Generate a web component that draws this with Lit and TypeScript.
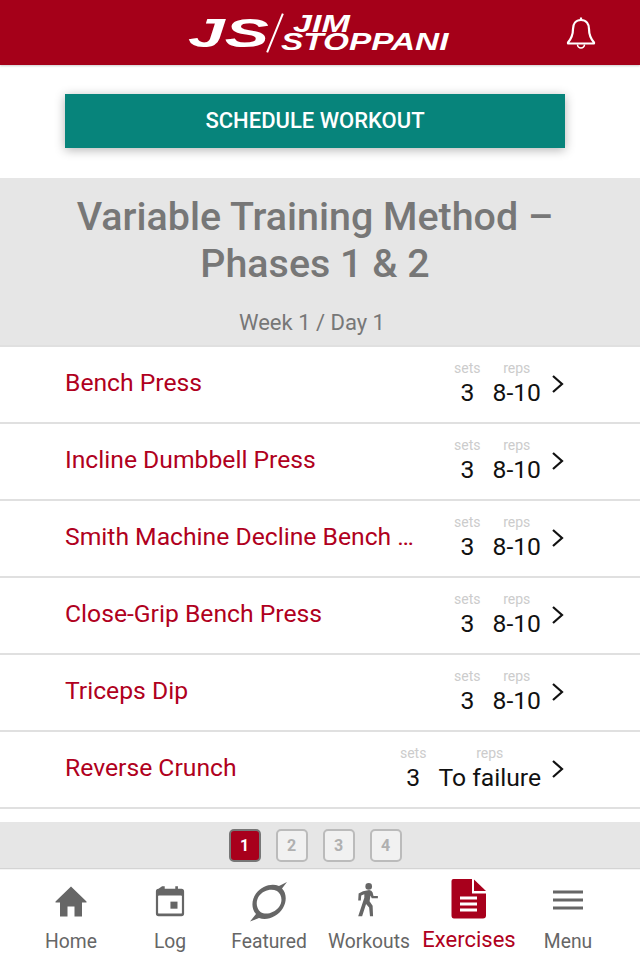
import { LitElement, html, css, svg } from "lit";
import { customElement } from "lit/decorators.js";

const rows = [
  ["Bench Press", "3", "8-10"],
  ["Incline Dumbbell Press", "3", "8-10"],
  ["Smith Machine Decline Bench Press", "3", "8-10"],
  ["Close-Grip Bench Press", "3", "8-10"],
  ["Triceps Dip", "3", "8-10"],
  ["Reverse Crunch", "3", "To failure"],
];

const icons: Record<string, unknown> = {
  home: svg`<svg width="34" height="34" viewBox="0 0 34 34"><path d="M17 1.500 L32.500 16.500 V17.500 H28 V31.500 H20.500 V21.500 H13.500 V31.500 H6 V17.500 H1.500 V16.500 Z" fill="#666"/></svg>`,
  log: svg`<svg width="30" height="33.500" viewBox="0 0 34 38"><path d="M8 2.500h3v3h12v-3h3v3h4q3 0 3 3v25q0 3-3 3H4q-3 0-3-3V8.500q0-3 3-3z" fill="#666"/><rect x="3.500" y="13" width="27" height="20.500" rx="1" fill="#fff"/><rect x="17.500" y="20" width="8" height="8" fill="#666"/></svg>`,
  featured: svg`<svg width="40" height="44" viewBox="0 0 40 44"><path d="M38 1 L33 7.500 C37.500 12 38 20 34 27 C28.500 36 18 40 10 37 L1 40.500 L7 33 C2 27.500 2.500 19 7 12.500 C13 4.500 23 2 30 5 Z M28 10 C22 7 14 9.500 10 15 C6.500 20.500 7 27 11.500 31 C17 34.500 25 32 30 26 C34 20.500 33 13.500 28 10 Z" fill="#666" fill-rule="evenodd"/></svg>`,
  workouts: svg`<svg width="23" height="35" viewBox="0 0 26 40"><circle cx="15.500" cy="5" r="3.800" fill="#666"/><path d="M9 10.500 L16 9 Q19 9 20 12 L21 16 H26 V18.500 H19 L17.500 15.500 L16.500 22 L20 27 L20.500 39 H17 L16 29 L12.500 25 L8 39 H3.500 L10.500 18 L10.500 14 L7 15.500 L6.500 21 H3.500 L4 13 Z" fill="#666"/></svg>`,
  exercises: svg`<svg width="36" height="40" viewBox="0 0 36 40"><path d="M2.500 0 H21 V14.500 H35 V36.500 Q35 39.500 32 39.500 H3 Q0.500 39.500 0.500 36.500 V2 Q0.500 0 2.500 0 Z" fill="#a8001c"/><path d="M23 0.500 L35 12 H23 Z" fill="#a8001c"/><path d="M9 17.500h17v3H9zM9 23.500h17v3H9zM9 29.500h17v3H9z" fill="#fff"/></svg>`,
  menu: svg`<svg width="32" height="24" viewBox="0 0 32 24"><path d="M1 2.500h30v3H1zM1 10.500h30v3H1zM1 18.500h30v3H1z" fill="#666"/></svg>`,
};

const nav = [
  ["home", "Home", "ic-home"],
  ["log", "Log", "ic-log"],
  ["featured", "Featured", "ic-featured"],
  ["workouts", "Workouts", "ic-workouts"],
  ["exercises", "Exercises", "ic-exercises"],
  ["menu", "Menu", "ic-menu"],
];

@customElement("app-root")
export class AppRoot extends LitElement {
  static styles = css`
    :host {
      display: block;
      width: 640px;
      height: 960px;
      background: #fff;
      font-family: Roboto, sans-serif;
      overflow: hidden;
    }
    .page {
      display: flex;
      flex-direction: column;
      height: 960px;
    }
    header {
      height: 65px;
      flex: none;
      background: #a50019;
      box-shadow: 0 1px 2px rgba(0, 0, 0, 0.2);
      display: flex;
      align-items: center;
      justify-content: space-between;
      color: #fff;
      padding: 0 44px 0 188px;
      box-sizing: border-box;
    }
    .logo {
      display: flex;
      align-items: center;
      font-family: "Liberation Sans", sans-serif;
      font-style: italic;
      font-weight: 700;
      line-height: 1;
    }
    .js {
      font-size: 40px;
      width: 49px;
      margin-right: 32px;
      transform: scaleX(1.65);
      transform-origin: left center;
      white-space: nowrap;
      margin-top: 1px;
    }
    .slash {
      width: 2px;
      height: 42px;
      background: #fff;
      transform: rotate(22deg);
      margin-right: 3px;
      margin-left: 5px;
    }
    .name {
      display: flex;
      flex-direction: column;
      font-size: 24px;
      margin-left: 2px;
    }
    .name span {
      display: block;
      height: 18px;
      line-height: 18px;
      white-space: nowrap;
      transform-origin: left center;
    }
    .jim { margin-left: 12px; transform: scaleX(1.42); }
    .stop { transform: scaleX(1.39); width: 122px; }
    .bell { display: block; }
    .btn-wrap {
      height: 113px;
      flex: none;
      padding: 29px 75px 0 65px;
      box-sizing: border-box;
    }
    .btn {
      height: 54px;
      background: #07847b;
      color: #fff;
      font-size: 22px;
      font-weight: 500;
      display: flex;
      align-items: center;
      justify-content: center;
      box-sizing: border-box;
      padding-bottom: 2px;
      box-shadow: 0 2px 10px rgba(0, 0, 0, 0.3);
    }
    .head {
      height: 167px;
      flex: none;
      background: #e6e6e6;
      text-align: center;
      box-sizing: border-box;
      padding: 15px 10px 0 0;
      color: #777;
    }
    h1 {
      margin: 0;
      font-size: 39.400px;
      line-height: 47px;
      font-weight: 500;
    }
    .week {
      font-size: 22px;
      margin-top: 23px;
      line-height: 26px;
      padding-right: 6px;
    }
    .row {
      height: 77px;
      flex: none;
      box-sizing: border-box;
      border-top: 2px solid #e0e0e0;
      display: flex;
      align-items: center;
      padding: 0 75px 0 65px;
    }
    .ex {
      flex: 1;
      min-width: 0;
      font-size: 24.700px;
      color: #b00020;
      white-space: nowrap;
      overflow: hidden;
      text-overflow: ellipsis;
      padding-right: 30px;
      line-height: 34px;
      margin-top: -3px;
    }
    .vals {
      display: grid;
      grid-template-columns: auto auto;
      column-gap: 12px;
      justify-items: center;
    }
    .lbl { font-size: 14px; line-height: 16px; color: #ccc; }
    .val { font-size: 24.700px; line-height: 33px; color: #111; }
    .chev { flex: none; margin-left: 10px; display: block; margin-top: -2px; }
    .spacer {
      height: 15px;
      flex: none;
      border-top: 2px solid #e0e0e0;
      box-sizing: border-box;
    }
    .pager {
      height: 46px;
      flex: none;
      background: #e6e6e6;
      display: flex;
      align-items: center;
      justify-content: center;
      gap: 15px;
      box-sizing: border-box;
      padding-right: 10px;
    }
    .pg {
      width: 32px;
      height: 33px;
      box-sizing: border-box;
      border: 2px solid #bbb;
      border-radius: 5px;
      background: #f1f1f1;
      color: #b0b0b0;
      font-size: 16px;
      font-weight: 700;
      display: flex;
      align-items: center;
      justify-content: center;
    }
    .pg.on {
      background: #a8001c;
      border-color: #777;
      color: #fff;
    }
    .rule { height: 2px; flex: none; background: #f4f4f4; border-top: 1px solid #d4d4d4; box-sizing: border-box; }
    nav {
      flex: 1;
      position: relative;
      background: #fff;
    }
    .item {
      position: absolute;
      top: 0;
      width: 0;
      height: 90px;
      color: #666;
      font-size: 19.300px;
    }
    .item svg { display: block; }
    .icon { position: absolute; }
    .label {
      position: absolute;
      white-space: nowrap;
      transform: translateX(-50%);
      top: 60px;
      line-height: 24px;
    }
    .item.on .label { color: #b00020; font-size: 22px; top: 58px; }
    .ic-home { left: -17px; top: 15px; }
    .ic-log { left: -15px; top: 14px; }
    .ic-featured { left: -20px; top: 11px; }
    .ic-workouts { left: -14px; top: 12px; }
    .ic-exercises { left: -18px; top: 9px; }
    .ic-menu { left: -16px; top: 18px; }
  `;

  render() {
    const centers = [71, 170, 269, 369, 469, 568];
    return html`<div class="page">
      <header>
        <div class="logo">
          <div class="js">JS</div>
          <div class="slash"></div>
          <div class="name"><span class="jim">JIM</span><span class="stop">STOPPANI</span></div>
        </div>
        <svg class="bell" width="30" height="34" viewBox="0 0 30 34" fill="none" stroke="#fff" stroke-width="2.200" stroke-linejoin="round">
          <path d="M15 4c-5.500 0-8 4-8 9 0 6-2 10-5 13.500v1h26v-1C25 23 23 19 23 13c0-5-2.500-9-8-9z"/>
          <path d="M15 1.500V4" />
          <path d="M11.500 28.500a3.500 3.500 0 0 0 7 0" stroke-width="1.500"/>
        </svg>
      </header>
      <div class="btn-wrap"><div class="btn">SCHEDULE WORKOUT</div></div>
      <div class="head">
        <h1>Variable Training Method –<br />Phases 1 &amp; 2</h1>
        <div class="week">Week 1 / Day 1</div>
      </div>
      ${rows.map(
        (r) => html`<div class="row">
          <div class="ex">${r[0]}</div>
          <div class="vals">
            <div class="lbl">sets</div><div class="lbl">reps</div>
            <div class="val">${r[1]}</div><div class="val">${r[2]}</div>
          </div>
          <svg class="chev" width="14" height="20" viewBox="0 0 14 20" fill="none" stroke="#111" stroke-width="2.200"><path d="M2 2l9 8-9 8"/></svg>
        </div>`
      )}
      <div class="spacer"></div>
      <div class="pager">
        ${["1", "2", "3", "4"].map((n, i) => html`<div class="pg ${i === 0 ? "on" : ""}">${n}</div>`)}
      </div>
      <div class="rule"></div>
      <nav>
        ${nav.map(
          (n, i) => html`<div class="item ${n[0] === "exercises" ? "on" : ""}" style="left:${centers[i]}px">
            <div class="icon ${n[2]}">${icons[n[0]]}</div>
            <span class="label">${n[1]}</span>
          </div>`
        )}
      </nav>
    </div>`;
  }
}
